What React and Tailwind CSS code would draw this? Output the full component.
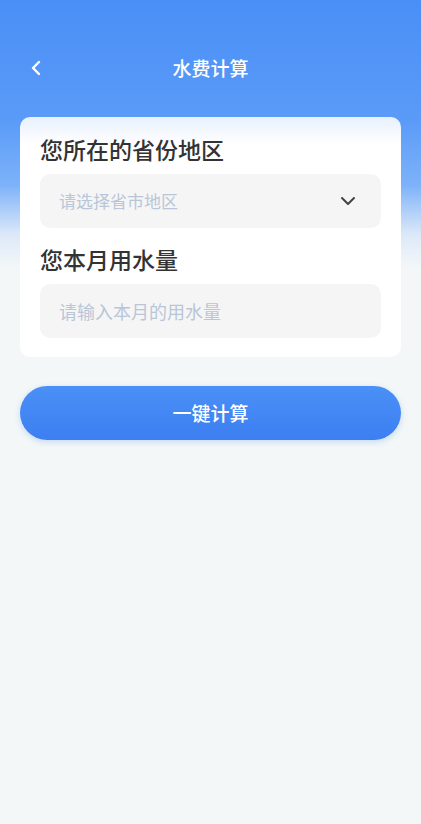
import React from "react";

export default function App() {
  const font = "font-['Noto_Sans_CJK_SC','Noto_Sans',sans-serif]";
  return (
    <div
      className={`${font} min-h-[824px] w-full bg-[linear-gradient(180deg,#4a8ff6_0px,#5a9bf8_120px,#7db2f9_185px,#dde9f8_235px,#f3f7f8_268px,#f4f7f7_100%)] px-5`}
    >
      <div className="relative flex h-[117px] items-center justify-center pb-[2px]">
        <button className="absolute left-[2px] top-[54px] flex h-7 w-7 items-center justify-center">
          <svg width="14" height="18" viewBox="0 0 14 18" fill="none">
            <path d="M10 3L4 9l6 6" stroke="white" strokeWidth="2.4" strokeLinecap="round" strokeLinejoin="round" />
          </svg>
        </button>
        <div className="absolute top-[53px] text-[19px] font-medium leading-[30px] text-white">水费计算</div>
      </div>

      <div className="rounded-[10px] bg-[linear-gradient(180deg,#e8f1fd_0px,#ffffff_28px)] px-5 pb-[19px] pt-[13px]">
        <div className="text-[23px] font-medium leading-[38px] text-[#333333]">您所在的省份地区</div>
        <div className="mt-[6px] flex h-[54px] items-center justify-between rounded-[10px] bg-[#f5f5f5] pl-[19px] pr-[25px]">
          <span className="text-[17px] text-[#b9c6d8]">请选择省市地区</span>
          <svg width="16" height="10" viewBox="0 0 16 10" fill="none">
            <path d="M2 2l6 6 6-6" stroke="#444" strokeWidth="2" strokeLinecap="round" strokeLinejoin="round" />
          </svg>
        </div>
        <div className="mt-[12px] text-[23px] font-medium leading-[38px] text-[#333333]">您本月用水量</div>
        <div className="mt-[6px] flex h-[54px] items-center rounded-[10px] bg-[#f5f5f5] pl-[19px]">
          <span className="text-[18px] text-[#b9c6d8]">请输入本月的用水量</span>
        </div>
      </div>

      <button className="mt-[29px] flex h-[54px] w-full items-center justify-center rounded-full bg-[linear-gradient(180deg,#4b90f6,#3b7ff2)] text-[19px] font-medium text-white shadow-[0_2px_6px_rgba(59,127,242,0.25)]">
        一键计算
      </button>
    </div>
  );
}
